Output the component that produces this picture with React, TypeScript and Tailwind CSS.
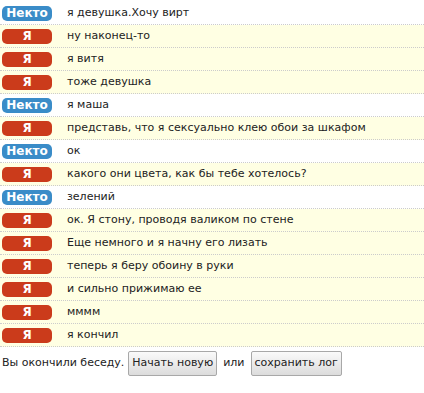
import React from "react";

type Msg = { me: boolean; text: string };

const messages: Msg[] = [
  { me: false, text: "я девушка.Хочу вирт" },
  { me: true, text: "ну наконец-то" },
  { me: true, text: "я витя" },
  { me: true, text: "тоже девушка" },
  { me: false, text: "я маша" },
  { me: true, text: "представь, что я сексуально клею обои за шкафом" },
  { me: false, text: "ок" },
  { me: true, text: "какого они цвета, как бы тебе хотелось?" },
  { me: false, text: "зелений" },
  { me: true, text: "ок. Я стону, проводя валиком по стене" },
  { me: true, text: "Еще немного и я начну его лизать" },
  { me: true, text: "теперь я беру обоину в руки" },
  { me: true, text: "и сильно прижимаю ее" },
  { me: true, text: "мммм" },
  { me: true, text: "я кончил" },
];

function Badge({ me }: { me: boolean }) {
  return (
    <span
      className={`inline-flex items-center justify-center w-[50px] h-[15px] rounded-[5px] text-white font-bold text-[12px] leading-none ${
        me ? "bg-[#cb3b1b]" : "bg-[#3a8cc8]"
      }`}
    >
      {me ? "Я" : "Некто"}
    </span>
  );
}

export default function App() {
  return (
    <div className="bg-white text-[#222] text-[12px] font-['DejaVu_Sans',Verdana,sans-serif] w-[424px] h-[393px] pt-[2px]">
      <div className="flex flex-col">
        {messages.map((m, i) => (
          <div
            key={i}
            className={`flex items-center h-[23px] pl-[2px] border-b border-dotted border-[#cccccc] ${
              m.me ? "bg-[#ffffe3]" : "bg-white"
            }`}
          >
            <Badge me={m.me} />
            <span className="ml-[15px] text-[11px]">{m.text}</span>
          </div>
        ))}
      </div>
      <div className="flex items-center pl-[2px] mt-[4px] text-[11px]">
        <span>Вы окончили беседу.</span>
        <button className="ml-[4px] h-[25px] px-[3px] border border-[#a8a8a8] rounded-[2px] bg-gradient-to-b from-[#fafafa] to-[#dcdcdc] text-[11px] text-[#222]">
          Начать новую
        </button>
        <span className="mx-[6px]">или</span>
        <button className="h-[25px] px-[3px] border border-[#a8a8a8] rounded-[2px] bg-gradient-to-b from-[#fafafa] to-[#dcdcdc] text-[11px] text-[#222]">
          сохранить лог
        </button>
      </div>
    </div>
  );
}
